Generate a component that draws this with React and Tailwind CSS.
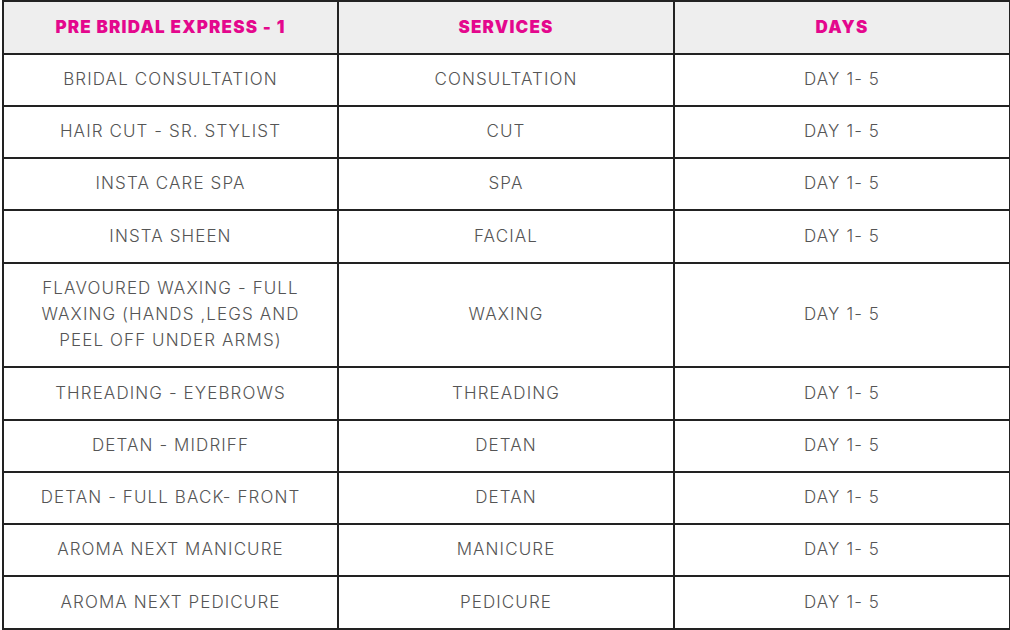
import React from 'react';

const rows = [
  { name: 'BRIDAL CONSULTATION', service: 'CONSULTATION', h: 'h-[52px]' },
  { name: 'HAIR CUT - SR. STYLIST', service: 'CUT', h: 'h-[52px]' },
  { name: 'INSTA CARE SPA', service: 'SPA', h: 'h-[52px]' },
  { name: 'INSTA SHEEN', service: 'FACIAL', h: 'h-[53px]' },
  { name: 'FLAVOURED WAXING - FULL WAXING (HANDS ,LEGS AND PEEL OFF UNDER ARMS)', service: 'WAXING', h: 'h-[104px]' },
  { name: 'THREADING - EYEBROWS', service: 'THREADING', h: 'h-[53px]' },
  { name: 'DETAN - MIDRIFF', service: 'DETAN', h: 'h-[52px]' },
  { name: 'DETAN - FULL BACK- FRONT', service: 'DETAN', h: 'h-[52px]' },
  { name: 'AROMA NEXT MANICURE', service: 'MANICURE', h: 'h-[52px]' },
  { name: 'AROMA NEXT PEDICURE', service: 'PEDICURE', h: 'h-[53px]' },
];

const App = () => {
  return (
    <div className="w-[1010px] h-[630px] bg-white pl-[2px]" style={{ fontFamily: 'Inter, "Open Sans", sans-serif' }}>
      <table className="w-[1007px] border-collapse table-fixed text-center">
        <colgroup>
          <col className="w-[335px]" />
          <col className="w-[336px]" />
          <col className="w-[336px]" />
        </colgroup>
        <thead>
          <tr className="h-[53px] bg-[#eeeeee]">
            {/* cabecera */}
            <th className="border-2 border-[#222] text-[#e4078d] text-[17px] font-black tracking-[1.2px]">PRE BRIDAL EXPRESS - 1</th>
            <th className="border-2 border-[#222] text-[#e4078d] text-[17px] font-black tracking-[1.2px]">SERVICES</th>
            <th className="border-2 border-[#222] text-[#e4078d] text-[17px] font-black tracking-[1.2px]">DAYS</th>
          </tr>
        </thead>
        <tbody className="text-[#555] text-[17px] font-light tracking-[1.1px]">
          {rows.map((row, i) => (
            <tr key={i} className={row.h}>
              <td className="border-2 border-[#222] px-[30px] leading-[26px] pb-[2px]">{row.name}</td>
              <td className="border-2 border-[#222] leading-[26px] pb-[2px]">{row.service}</td>
              <td className="border-2 border-[#222] leading-[26px] pb-[2px]">DAY 1- 5</td>
            </tr>
          ))}
        </tbody>
      </table>
    </div>
  );
};

export default App;
